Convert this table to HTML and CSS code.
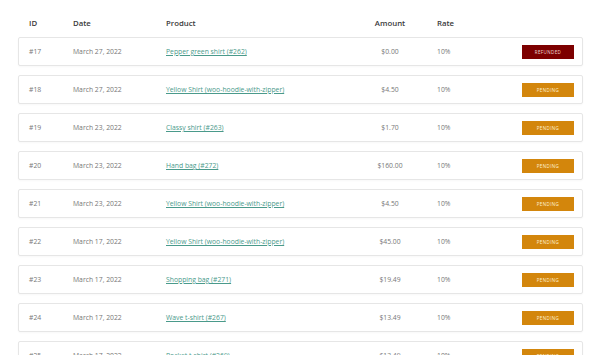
FILE: index.html
```html
<!DOCTYPE html>
<html>
<head>
<meta charset="utf-8">
<link rel="stylesheet" href="styles.css">
</head>
<body>
<div class="table">
  <div class="head grid">
    <div>ID</div><div>Date</div><div>Product</div><div class="amt">Amount</div><div class="rate">Rate</div><div></div>
  </div>
  <div class="row grid"><div>#17</div><div>March 27, 2022</div><div><a href="#">Pepper green shirt (#262)</a></div><div class="amt">$0.00</div><div class="rate">10%</div><div class="st"><span class="badge refunded">REFUNDED</span></div></div>
  <div class="row grid"><div>#18</div><div>March 27, 2022</div><div><a href="#">Yellow Shirt (woo-hoodie-with-zipper)</a></div><div class="amt">$4.50</div><div class="rate">10%</div><div class="st"><span class="badge">PENDING</span></div></div>
  <div class="row grid"><div>#19</div><div>March 23, 2022</div><div><a href="#">Classy shirt (#263)</a></div><div class="amt">$1.70</div><div class="rate">10%</div><div class="st"><span class="badge">PENDING</span></div></div>
  <div class="row grid"><div>#20</div><div>March 23, 2022</div><div><a href="#">Hand bag (#272)</a></div><div class="amt">$160.00</div><div class="rate">10%</div><div class="st"><span class="badge">PENDING</span></div></div>
  <div class="row grid"><div>#21</div><div>March 23, 2022</div><div><a href="#">Yellow Shirt (woo-hoodie-with-zipper)</a></div><div class="amt">$4.50</div><div class="rate">10%</div><div class="st"><span class="badge">PENDING</span></div></div>
  <div class="row grid"><div>#22</div><div>March 17, 2022</div><div><a href="#">Yellow Shirt (woo-hoodie-with-zipper)</a></div><div class="amt">$45.00</div><div class="rate">10%</div><div class="st"><span class="badge">PENDING</span></div></div>
  <div class="row grid"><div>#23</div><div>March 17, 2022</div><div><a href="#">Shopping bag (#271)</a></div><div class="amt">$19.49</div><div class="rate">10%</div><div class="st"><span class="badge">PENDING</span></div></div>
  <div class="row grid"><div>#24</div><div>March 17, 2022</div><div><a href="#">Wave t-shirt (#267)</a></div><div class="amt">$13.49</div><div class="rate">10%</div><div class="st"><span class="badge">PENDING</span></div></div>
  <div class="row grid"><div>#25</div><div>March 17, 2022</div><div><a href="#">Pocket t-shirt (#269)</a></div><div class="amt">$13.49</div><div class="rate">10%</div><div class="st"><span class="badge">PENDING</span></div></div>
</div>
</body>
</html>
```
FILE: styles.css
```css
html, body {
  margin: 0;
  padding: 0;
  background: #fff;
}
body {
  font-family: "Open Sans", "Noto Sans", sans-serif;
  color: #777;
  overflow: hidden;
  height: 355px;
}
.table {
  margin-left: 18px;
  width: 565px;
  padding-top: 13px;
  display: flex;
  flex-direction: column;
  gap: 9px;
}
.grid {
  display: grid;
  grid-template-columns: 44px 93px 194px 60px 102px 52px;
  align-items: center;
  padding: 0 10px;
}
.head {
  height: 20px;
  padding-left: 11px;
  font-size: 7.8px;
  font-weight: 600;
  color: #3a3a3a;
  margin-bottom: -5px;
}
.row {
  height: 27px;
  border: 1px solid #e6e6e6;
  border-radius: 2px;
  font-size: 6.8px;
  box-shadow: 0 1px 2px rgba(0,0,0,0.03);
}
.amt {
  text-align: center;
}
.rate {
  padding-left: 17px;
}
a {
  color: #4a9a8b;
  text-decoration: underline;
}
.st {
  display: flex;
  justify-content: flex-end;
}
.badge {
  display: flex;
  align-items: center;
  justify-content: center;
  width: 52px;
  height: 14px;
  background: #d3860c;
  color: #fff3d8;
  font-size: 4.5px;
  letter-spacing: 0.4px;
}
.badge.refunded {
  background: #7d0000;
  color: #f2d6d6;
}
```
